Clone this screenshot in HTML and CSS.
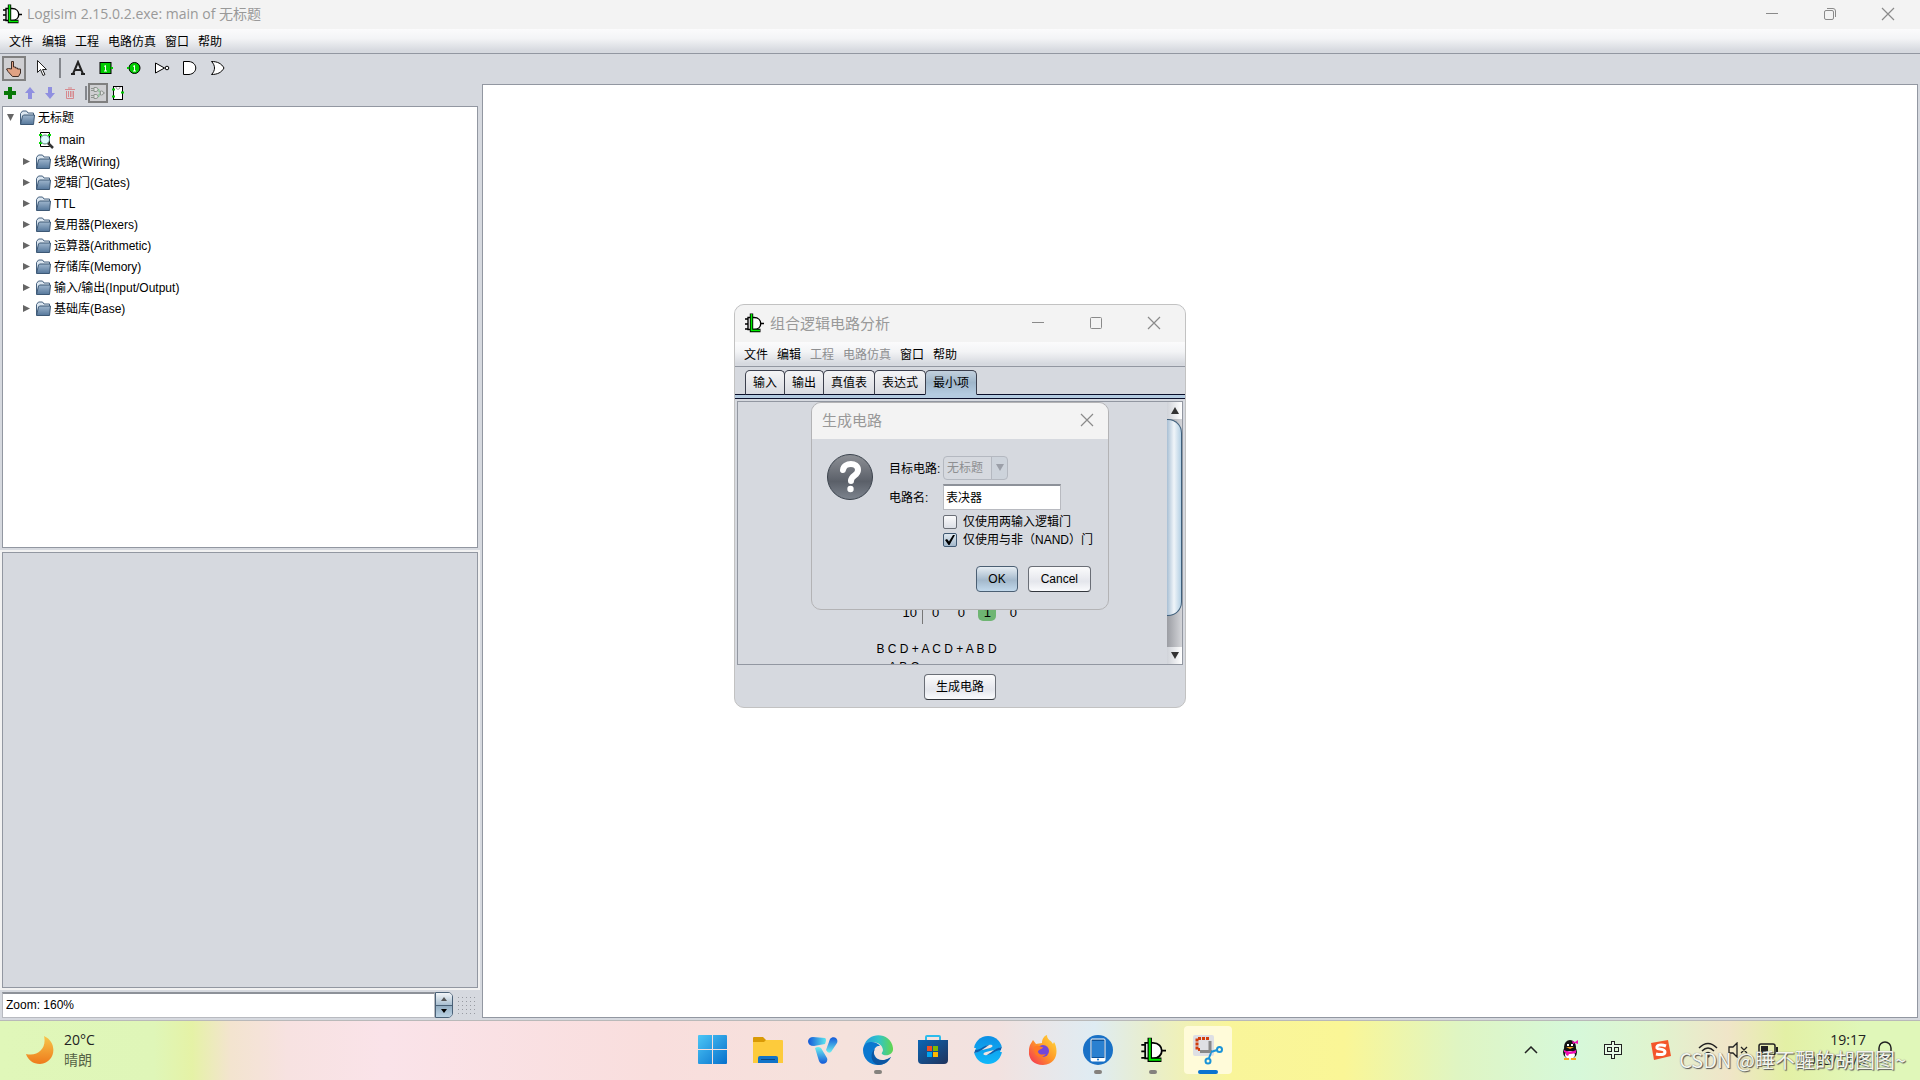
FILE: index.html
```
<!DOCTYPE html>
<html lang="zh-CN">
<head>
  <meta charset="UTF-8">
  <meta name="viewport" content="width=device-width, initial-scale=1.0">
  <title>Logisim 2.15.0.2.exe: main of 无标题</title>
  <link rel="stylesheet" href="styles.css">
</head>
<body>
  <!-- shared icons -->
  <svg class="defs" width="0" height="0" aria-hidden="true">
    <defs>
      <linearGradient id="folderFill" x1="0" y1="0" x2="0" y2="1">
        <stop offset="0" stop-color="#9fb6cd"/><stop offset="1" stop-color="#55779b"/>
      </linearGradient>
      <symbol id="logo" viewBox="0 0 20 20">
        <path d="M1 6h3M1 11h3M1 16h3M17 10.500h3" stroke="#000" stroke-width="1.300"/>
        <path d="M4 4.500h6c9 0 9 12 0 12H4z" fill="#fff" stroke="#000" stroke-width="1.400"/>
        <path d="M7.500 .5v17h9" fill="none" stroke="#000" stroke-width="3.400"/>
        <path d="M7.500 1v16.500h8.500" fill="none" stroke="#0e0" stroke-width="1.600"/>
      </symbol>
      <symbol id="folder" viewBox="0 0 16 16">
        <path d="M1.500 14V3.500L3.500 1h4l1.500 2h5.500v3" fill="#dbe6f0" stroke="#46617e"/>
        <path d="M1.500 14.500L3.500 6l1-1h11l-1 9.500z" fill="url(#folderFill)" stroke="#3d5875"/>
      </symbol>
      <symbol id="closeX" viewBox="0 0 14 14">
        <path d="M1 1l12 12M13 1L1 13" stroke="#8a8a8a" stroke-width="1.200"/>
      </symbol>
      <symbol id="minus" viewBox="0 0 14 14">
        <path d="M1 6.500h12" stroke="#8a8a8a"/>
      </symbol>
    </defs>
  </svg>

  <header class="titlebar">
    <svg class="logo" width="20" height="20"><use href="#logo"/></svg>
    <h1>Logisim 2.15.0.2.exe: main of 无标题</h1>
    <div class="win-buttons">
      <button aria-label="最小化"><svg width="14" height="14"><use href="#minus"/></svg></button>
      <button aria-label="还原"><svg width="14" height="14" viewBox="0 0 14 14" fill="none" stroke="#8a8a8a"><rect x="1.500" y="3.500" width="9" height="9" rx="1.500"/><path d="M4 1.500h6a2.500 2.500 0 0 1 2.500 2.500v6"/></svg></button>
      <button aria-label="关闭"><svg width="14" height="14"><use href="#closeX"/></svg></button>
    </div>
  </header>

  <nav class="menubar">
    <button>文件</button><button>编辑</button><button>工程</button><button>电路仿真</button><button>窗口</button><button>帮助</button>
  </nav>

  <div class="toolbar">
    <button class="selected" aria-label="戳工具">
      <svg width="18" height="18" viewBox="0 0 18 18"><path d="M6.500 10V2.500h2V8h2v1h2v1h3v4l-2 3.500h-6L3 12.500 1.500 10l2-.5z" fill="#e0a284" stroke="#402c24"/></svg>
    </button>
    <button aria-label="编辑工具">
      <svg width="18" height="18" viewBox="0 0 18 18"><path d="M4.500 1.500v12l3-3 2.500 6 2-1-2.500-5h4z" fill="#fff" stroke="#222"/></svg>
    </button>
    <span class="sep"></span>
    <button aria-label="文本">
      <svg width="16" height="16" viewBox="0 0 16 16" fill="none" stroke="#222" stroke-width="2"><path d="M3 14L8 2l5 12M5 10h6"/><path d="M1 14h4M11 14h4"/></svg>
    </button>
    <button aria-label="输入引脚">
      <svg width="14" height="14" viewBox="0 0 14 14"><rect x="1" y="1.500" width="11" height="11" fill="#0c0" stroke="#000"/><path d="M5 5.500l1.500-1V10M5 10h3" fill="none" stroke="#fff"/><path d="M13 6v2" stroke="#0c0" stroke-width="2"/></svg>
    </button>
    <button aria-label="输出引脚">
      <svg width="14" height="14" viewBox="0 0 14 14"><circle cx="7.500" cy="7" r="5.500" fill="#0c0" stroke="#000"/><path d="M6 5.500l1.500-1V10M6 10h3" fill="none" stroke="#fff"/><path d="M1 6v2" stroke="#0c0" stroke-width="2"/></svg>
    </button>
    <button aria-label="非门">
      <svg width="16" height="14" viewBox="0 0 16 14" fill="#fff" stroke="#000"><path d="M1.500 2v10l9-5z"/><circle cx="13" cy="7" r="1.800"/></svg>
    </button>
    <button aria-label="与门">
      <svg width="14" height="14" viewBox="0 0 14 14"><path d="M.5 .5v13H6c9-1 9-12 0-13z" fill="#fff" stroke="#000"/></svg>
    </button>
    <button aria-label="或门">
      <svg width="14" height="14" viewBox="0 0 14 14"><path d="M.5 .5c4 4 4 9 0 13 6 0 10-2 12.500-6.500C10.500 2.500 6.500 .5 .5 .5z" fill="#fff" stroke="#000"/></svg>
    </button>
  </div>

  <main class="workspace">
    <aside class="side">
      <div class="small-toolbar">
        <button aria-label="添加电路"><svg width="12" height="12" viewBox="0 0 12 12"><path d="M6 0v12M0 6h12" stroke="#087808" stroke-width="4"/></svg></button>
        <button aria-label="上移"><svg width="12" height="12" viewBox="0 0 12 12"><path d="M6 0l5 6H8v6H4V6H1z" fill="#8f8fe0"/></svg></button>
        <button aria-label="下移"><svg width="12" height="12" viewBox="0 0 12 12"><path d="M6 12l5-6H8V0H4v6H1z" fill="#8f8fe0"/></svg></button>
        <button aria-label="删除"><svg width="12" height="12" viewBox="0 0 12 12" fill="none" stroke="#d6898e"><path d="M1 2.500h10M4 1h4M2.500 4v7.500h7V4M4.500 4v6M6.500 4v6M8 4v6"/></svg></button>
        <span class="sep"></span>
        <button class="selected" aria-label="编辑电路布局"><svg width="14" height="14" viewBox="0 0 14 14" fill="#e2e2e2" stroke="#8f9590"><path d="M3 1.500h2a2 2 0 0 1 0 4H3zM3 8.500h2a2 2 0 0 1 0 4H3zM9.500 5h1a2 2 0 0 1 0 4h-1z"/><path d="M0 2.500h3M0 4.500h3M0 9.500h3M0 11.500h3M12 7h2"/><path d="M7 3.500h1V6h1M7 10.500h1V8h1" fill="none" stroke="#7cc08a"/></svg></button>
        <button aria-label="编辑电路外观"><svg width="14" height="14" viewBox="0 0 14 14"><rect x="2.500" y=".5" width="9" height="13" fill="#fff" stroke="#000"/><path d="M5 1c0 3 4 3 4 0" fill="none" stroke="#999"/><path d="M1 3.500h3M1 10.500h3M10 6.500h3" stroke="#0c0" stroke-width="2"/></svg></button>
      </div>

      <ul class="tree">
        <li class="root"><button class="toggle open" aria-label="折叠"></button><svg width="16" height="16"><use href="#folder"/></svg><span>无标题</span></li>
        <li class="circuit"><svg width="16" height="18" viewBox="0 0 16 18"><path d="M2.500 1.500h9v14h-9z" fill="#fff" stroke="#000"/><path d="M1 4h3M1 12h3M10 4h3" stroke="#0d0" stroke-width="2"/><circle cx="7" cy="8.500" r="4.500" fill="#dffcff" stroke="#587" /><path d="M10 12l5 5" stroke="#333" stroke-width="2.500"/></svg><span>main</span></li>
        <li><button class="toggle" aria-label="展开"></button><svg width="16" height="16"><use href="#folder"/></svg><span>线路(Wiring)</span></li>
        <li><button class="toggle" aria-label="展开"></button><svg width="16" height="16"><use href="#folder"/></svg><span>逻辑门(Gates)</span></li>
        <li><button class="toggle" aria-label="展开"></button><svg width="16" height="16"><use href="#folder"/></svg><span>TTL</span></li>
        <li><button class="toggle" aria-label="展开"></button><svg width="16" height="16"><use href="#folder"/></svg><span>复用器(Plexers)</span></li>
        <li><button class="toggle" aria-label="展开"></button><svg width="16" height="16"><use href="#folder"/></svg><span>运算器(Arithmetic)</span></li>
        <li><button class="toggle" aria-label="展开"></button><svg width="16" height="16"><use href="#folder"/></svg><span>存储库(Memory)</span></li>
        <li><button class="toggle" aria-label="展开"></button><svg width="16" height="16"><use href="#folder"/></svg><span>输入/输出(Input/Output)</span></li>
        <li><button class="toggle" aria-label="展开"></button><svg width="16" height="16"><use href="#folder"/></svg><span>基础库(Base)</span></li>
      </ul>

      <div class="attributes"><div class="attributes-inner"></div></div>

      <div class="zoom">
        <input type="text" value="Zoom: 160%" aria-label="Zoom">
        <div class="spinner">
          <button aria-label="放大"><svg width="6" height="4" viewBox="0 0 6 4"><path d="M0 4h6L3 0z" fill="#555"/></svg></button>
          <button class="down" aria-label="缩小"><svg width="6" height="4" viewBox="0 0 6 4"><path d="M0 0h6L3 4z" fill="#000"/></svg></button>
        </div>
        <div class="grip"></div>
      </div>
    </aside>
    <section class="canvas"></section>
  </main>

  <footer class="taskbar">
    <div class="weather">
      <svg width="28" height="28" viewBox="0 0 28 28"><defs><linearGradient id="moon" x1="0" y1="0" x2="0" y2="1"><stop offset="0" stop-color="#f7c64a"/><stop offset="1" stop-color="#ee7a1c"/></linearGradient></defs><path d="M18 0c14 6 12 27-4 28C7 28 2 24 0 18c12 3 21-6 18-18z" fill="url(#moon)"/></svg>
      <div><p>20°C</p><p class="muted">晴朗</p></div>
    </div>

    <div class="apps">
      <button aria-label="开始"><svg width="30" height="30" viewBox="0 0 30 30"><defs><linearGradient id="win" x1="0" y1="0" x2="1" y2="1"><stop offset="0" stop-color="#4cc6f6"/><stop offset="1" stop-color="#0670cc"/></linearGradient></defs><path d="M0 1a1 1 0 0 1 1-1h13v14H0zM15 0h13a1 1 0 0 1 1 1v13H15zM0 15h14v14H1a1 1 0 0 1-1-1zM15 15h14v13a1 1 0 0 1-1 1H15z" fill="url(#win)"/></svg></button>
      <button aria-label="文件资源管理器"><svg width="30" height="28" viewBox="0 0 30 28"><path d="M0 2q0-1 1-1h9l3 3v5H0z" fill="#d99a06"/><path d="M0 6h11l2-2h16q1 0 1 1v22H0z" fill="#fdcb3c"/><path d="M5 27v-5q0-2 2-2h16q2 0 2 2v5z" fill="#1173c8"/><path d="M8 23.500h14" stroke="#0b477f"/></svg></button>
      <button aria-label="应用"><svg width="30" height="28" viewBox="0 0 30 28"><defs><linearGradient id="v1"><stop offset="0" stop-color="#1257d8"/><stop offset="1" stop-color="#5ee6ee"/></linearGradient><linearGradient id="v2" x1="0" y1="0" x2="0" y2="1"><stop offset="0" stop-color="#1257d8"/><stop offset="1" stop-color="#6df0f0"/></linearGradient><linearGradient id="v3" x1="0" y1="0" x2="0" y2="1"><stop offset="0" stop-color="#6df0f0"/><stop offset="1" stop-color="#1257d8"/></linearGradient></defs><path d="M5 1l12 1q2 1 0 6L6 10Q0 10 0 5 1 1 5 1z" fill="url(#v1)"/><path d="M22 3c3-4 9-1 7 4l-6 9q-3 2-5-2z" fill="url(#v2)"/><path d="M7 12q3-2 6 0l6 10c2 6-6 8-8 3z" fill="url(#v3)"/></svg></button>
      <button class="running" aria-label="Edge"><svg width="30" height="30" viewBox="0 0 30 30"><defs><linearGradient id="edge"><stop offset="0" stop-color="#249be0"/><stop offset=".5" stop-color="#31c4c9"/><stop offset="1" stop-color="#62d64b"/></linearGradient></defs><path d="M1 11C5-4 28-3 30 13c1 7-8 9-11 6-1-1 1-2 1-4C19 6 6 5 1 11z" fill="url(#edge)"/><path d="M0 15C0 5 13 5 17 11c-6-1-9 8-2 13 4 3 9 1 13-2-3 6-8 8-13 8C7 30 0 24 0 15z" fill="#0b78cf"/><path d="M12 14c-5 9 6 15 16 8-3 5-7 8-13 8C7 28 7 17 12 14z" fill="#0c56a2"/></svg></button>
      <button aria-label="Microsoft Store"><svg width="30" height="30" viewBox="0 0 30 30"><defs><linearGradient id="store" x1="0" y1="0" x2="1" y2="1"><stop offset="0" stop-color="#0b66b5"/><stop offset="1" stop-color="#20335c"/></linearGradient></defs><path d="M8 6V2q0-1 1-1h12q1 0 1 1v4" fill="none" stroke="#2cbcec" stroke-width="2"/><path d="M0 5h30v20q0 4-4 4H4q-4 0-4-4z" fill="url(#store)"/><path d="M9 11h5v5H9z" fill="#f25022"/><path d="M15 11h5v5h-5z" fill="#7fba00"/><path d="M9 17h5v5H9z" fill="#00a4ef"/><path d="M15 17h5v5h-5z" fill="#ffb900"/></svg></button>
      <button aria-label="浏览器"><svg width="28" height="28" viewBox="0 0 28 28"><defs><linearGradient id="swirl" x1="0" y1="0" x2="0" y2="1"><stop offset="0" stop-color="#0d8fe4"/><stop offset="1" stop-color="#10b8fa"/></linearGradient></defs><circle cx="14" cy="14" r="14" fill="url(#swirl)"/><path d="M0 17c6-1 9-7 15-8 4-1 5 2 1 3L4 15c-3 1-4 2-4 2zM28 11c-6 1-9 7-15 8-4 1-5-2-1-3l12-3c3-1 4-2 4-2z" fill="#f2e4e1"/><path d="M1 14c6 0 9-5 14-5-5 3-8 7-15 8zM27 14c-6 0-9 5-14 5 5-3 8-7 15-8z" fill="#0b5fae"/><path d="M0 12l2 0-2 5zM28 16h-2l2-5z" fill="#f2e4e1"/></svg></button>
      <button aria-label="Firefox"><svg width="28" height="30" viewBox="0 0 28 30"><defs><linearGradient id="fox" x1="1" y1="0" x2="0" y2="1"><stop offset="0" stop-color="#ffe03d"/><stop offset=".5" stop-color="#ff9528"/><stop offset="1" stop-color="#f3295a"/></linearGradient></defs><path d="M1 10l3-5 3 4 6-1c0-4 2-7 5-8 0 5 4 5 6 9l1-2c4 6 5 22-11 23C0 30-2 18 1 10z" fill="url(#fox)"/><circle cx="14" cy="16" r="6" fill="#7447d8"/><path d="M5 12c4-3 6 0 9 0-1 3-5 2-5 5 1 3 5 3 8 2-4 6-13 3-12-7z" fill="#ff7a24"/></svg></button>
      <button class="running" aria-label="手机助手"><svg width="30" height="30" viewBox="0 0 30 30"><circle cx="15" cy="15" r="15" fill="#1971c6"/><rect x="8" y="4" width="14" height="22" rx="1" fill="#0d5197" stroke="#fff"/><path d="M9 6h12v16H9z" fill="#2a80d0"/><path d="M8 23h14v3H8z" fill="#fff"/><circle cx="15" cy="24.500" r="1" fill="#1971c6"/></svg></button>
      <button class="running" aria-label="Logisim"><svg width="26" height="26"><use href="#logo"/></svg></button>
      <button class="running active" aria-label="截图工具"><svg width="30" height="30" viewBox="0 0 30 30"><rect width="21" height="21" rx="2" fill="#dedfe4"/><path d="M16 3.500H4v11h3" fill="none" stroke="#d23c0c" stroke-width="3" stroke-dasharray="3 1"/><path d="M17 6v11M7 16.500h12" fill="none" stroke="#888" stroke-width="3"/><circle cx="26.500" cy="14.500" r="2.500" fill="none" stroke="#1a93d8" stroke-width="2"/><circle cx="15" cy="26" r="2.500" fill="none" stroke="#1a93d8" stroke-width="2"/><path d="M18 17l6-2M18 18l-2 5" stroke="#1a93d8" stroke-width="2"/></svg></button>
    </div>

    <div class="tray">
      <button class="chevron" aria-label="显示隐藏的图标"><svg width="14" height="8" viewBox="0 0 14 8"><path d="M1 7l6-6 6 6" fill="none" stroke="#222" stroke-width="1.500"/></svg></button>
      <button class="qq" aria-label="QQ"><svg width="18" height="20" viewBox="0 0 18 20"><ellipse cx="8" cy="12" rx="7" ry="7" fill="#111"/><ellipse cx="8" cy="7" rx="6" ry="7" fill="#111"/><ellipse cx="8" cy="15" rx="5" ry="4" fill="#fff"/><path d="M5 4h2v2H5zM9 4h2v2H9z" fill="#fff"/><path d="M4 7h8l-4 2z" fill="#f9a51a"/><path d="M2 10q6 3 12 0v3q-4 1-7 1l-1 2-2-1v-2l-2-1zM10 1l3 1 3-2v4l-3-1-2 1z" fill="#f10bb4"/><path d="M2 18h5v2H2zM9 18h5v2H9z" fill="#f9a51a"/></svg></button>
      <button class="ime" aria-label="中文输入"><svg width="18" height="18" viewBox="0 0 18 18" fill="none"><path d="M2 5h14v7H2zM9 0v18" stroke="#222" stroke-width="4"/><path d="M2 5h14v7H2zM9 1v16" stroke="#e7fbe7" stroke-width="2"/></svg></button>
      <button class="sogou" aria-label="搜狗输入法"><svg width="20" height="20" viewBox="0 0 20 20"><path d="M0 3L17 0l3 16-17 4z" fill="#f4562a"/><path d="M15 6C10 4 5 5 6 8c1 2 8 0 8 4 0 3-5 3-9 2" fill="none" stroke="#fff" stroke-width="3"/></svg></button>
      <button class="status" aria-label="网络、音量、电池">
        <svg width="20" height="16" viewBox="0 0 20 16" fill="none" stroke="#222" stroke-width="1.500"><path d="M1 6q9-9 18 0M4 9q6-6 12 0M7 12q3-3 6 0"/><circle cx="10" cy="14" r="1" fill="#222"/></svg>
        <svg width="20" height="16" viewBox="0 0 20 16" fill="none" stroke="#222" stroke-width="1.300"><path d="M1 5h4l4-4v14l-4-4H1zM13 5l6 6M19 5l-6 6"/></svg>
        <svg width="20" height="16" viewBox="0 0 20 16"><rect x="1" y="2" width="16" height="11" rx="2" fill="none" stroke="#222" stroke-width="1.500"/><path d="M3 4h7v7H3zM18 5h2v5h-2z" fill="#222"/></svg>
      </button>
      <button class="clock"><span>19:17</span><span>2023/11/3</span></button>
      <button class="bell" aria-label="通知"><svg width="18" height="20" viewBox="0 0 18 20" fill="none" stroke="#222" stroke-width="1.500"><path d="M3 13V8a6 6 0 0 1 12 0v5l2 3H1zM7 17q2 2 4 0"/></svg></button>
    </div>
    <span class="watermark">CSDN @睡不醒的胡图图~</span>
  </footer>

  <!-- 组合逻辑电路分析 -->
  <section class="window">
    <header class="window-title">
      <svg width="20" height="20"><use href="#logo"/></svg>
      <h2>组合逻辑电路分析</h2>
      <div class="win-buttons">
        <button aria-label="最小化"><svg width="14" height="14"><use href="#minus"/></svg></button>
        <button aria-label="最大化"><svg width="14" height="14" viewBox="0 0 14 14"><rect x="1.500" y="1.500" width="11" height="11" rx="1" fill="none" stroke="#8a8a8a"/></svg></button>
        <button aria-label="关闭"><svg width="14" height="14"><use href="#closeX"/></svg></button>
      </div>
    </header>
    <nav class="menubar">
      <button>文件</button><button>编辑</button><button disabled>工程</button><button disabled>电路仿真</button><button>窗口</button><button>帮助</button>
    </nav>
    <div class="tabs">
      <button>输入</button><button>输出</button><button>真值表</button><button>表达式</button><button class="current">最小项</button>
    </div>
    <div class="pane">
      <div class="kmap">
        <table>
          <tr><th>10</th><td>0</td><td>0</td><td><span class="group">1</span></td><td>0</td></tr>
        </table>
        <p class="expr">B C D + A C D + A B D</p>
        <p class="expr next">A B C</p>
      </div>
      <div class="scrollbar">
        <button aria-label="向上"><svg width="8" height="7" viewBox="0 0 8 7"><path d="M0 7h8L4 0z" fill="#333"/></svg></button>
        <div class="track"><div class="thumb"></div></div>
        <button aria-label="向下"><svg width="8" height="7" viewBox="0 0 8 7"><path d="M0 0h8L4 7z" fill="#333"/></svg></button>
      </div>
    </div>
    <div class="window-footer"><button class="btn">生成电路</button></div>
  </section>

  <!-- 生成电路 -->
  <form class="dialog">
    <header class="dialog-title">
      <h2>生成电路</h2>
      <button type="button" aria-label="关闭"><svg width="14" height="14"><use href="#closeX"/></svg></button>
    </header>
    <div class="dialog-body">
      <svg class="question" width="48" height="48" viewBox="0 0 48 48"><defs><linearGradient id="q" x1="0" y1="0" x2="0" y2="1"><stop offset="0" stop-color="#8d9096"/><stop offset=".6" stop-color="#5b6069"/><stop offset="1" stop-color="#7d848e"/></linearGradient></defs><circle cx="24" cy="24" r="22.500" fill="url(#q)" stroke="#3c444e"/><path d="M17 17c1-8 15-8 15 0 0 6-7 5-7 11" fill="none" stroke="#fff" stroke-width="6" stroke-linecap="round"/><circle cx="24.500" cy="36" r="3.200" fill="#fff"/></svg>
      <div class="fields">
        <label for="target">目标电路:</label>
        <span class="combo">
          <select id="target" disabled><option>无标题</option></select>
          <svg width="8" height="7" viewBox="0 0 8 7"><path d="M0 0h8L4 7z" fill="#9b9fa8"/></svg>
        </span>
        <label for="circuit">电路名:</label>
        <input id="circuit" type="text" value="表决器">
        <div class="checks">
          <label><input type="checkbox">仅使用两输入逻辑门</label>
          <label><input type="checkbox" checked>仅使用与非（NAND）门</label>
        </div>
      </div>
    </div>
    <div class="dialog-buttons">
      <button type="button" class="btn primary">OK</button>
      <button type="button" class="btn">Cancel</button>
    </div>
  </form>
</body>
</html>
```
FILE: styles.css
```
* {
  box-sizing: border-box;
}
body {
  margin: 0;
  height: 100vh;
  display: flex;
  flex-direction: column;
  overflow: hidden;
  background: #d6d9df;
  color: #000;
  font: 12px/16px "Liberation Sans", "Noto Sans CJK SC", sans-serif;
}
h1, h2, p, ul {
  margin: 0;
  padding: 0;
}
button {
  margin: 0;
  padding: 0;
  border: 0;
  background: none;
  color: inherit;
  font: inherit;
}
input, select {
  margin: 0;
  color: #000;
  font: inherit;
}
svg {
  display: block;
  flex: none;
}
.defs {
  position: absolute;
}

/* title bar and menus */
.titlebar {
  display: flex;
  align-items: center;
  height: 29px;
  padding: 0 3px 1px 2px;
  background: #f3f3f3;
}
h1, h2 {
  color: #999;
  font: 15px/20px "Noto Sans CJK SC", sans-serif;
}
h1 {
  margin-left: 5px;
  font: 14px/20px "Open Sans", "Noto Sans CJK SC", sans-serif;
}
.win-buttons {
  display: flex;
  margin-left: auto;
}
.win-buttons button {
  display: flex;
  justify-content: center;
  width: 58px;
}
.menubar {
  display: flex;
  gap: 9px;
  align-items: center;
  height: 25px;
  padding: 2px 9px 0;
  border-bottom: 1px solid #9297a1;
  background: linear-gradient(#fbfbfc, #f3f4f6 40%, #d6d9df 90%);
}
.menubar button:disabled {
  color: #8e8f91;
}

/* toolbars */
.toolbar {
  display: flex;
  gap: 4px;
  align-items: center;
  height: 28px;
  padding: 0 2px;
}
.toolbar button, .small-toolbar button {
  display: flex;
  align-items: center;
  justify-content: center;
  width: 24px;
  height: 25px;
}
.toolbar .selected, .small-toolbar .selected {
  border: 2px solid #808080;
  background: #cfcfd2;
}
.sep {
  width: 2px;
  height: 20px;
  margin: 0 1px;
  background: #84878d;
}
.small-toolbar {
  display: flex;
  align-items: center;
  height: 24px;
  padding-bottom: 2px;
}
.small-toolbar button {
  width: 20px;
  height: 20px;
}
.small-toolbar .sep {
  height: 14px;
  margin: 0 1px 0 5px;
}

/* workspace */
.workspace {
  flex: 1;
  display: flex;
  min-height: 0;
}
.side {
  flex: 0 0 482px;
  display: flex;
  flex-direction: column;
}
.canvas {
  flex: 1;
  margin: 2px 2px 2px 0;
  border: 1px solid #9297a1;
  background: #fff;
}
.tree {
  flex: 444 0 0;
  margin: 0 4px 0 2px;
  overflow: hidden;
  border: 1px solid #9297a1;
  background: #fff;
  list-style: none;
}
.tree li {
  display: flex;
  gap: 3px;
  align-items: center;
  height: 21px;
  padding-left: 18px;
}
.tree .root {
  padding-left: 2px;
}
.tree .circuit {
  gap: 5px;
  height: 23px;
  padding-left: 35px;
}
.toggle {
  width: 11px;
  height: 11px;
}
.toggle::before {
  content: "";
  display: block;
  width: 7px;
  height: 7px;
  margin: 2px;
  background: #666;
  clip-path: polygon(0 0, 100% 50%, 0 100%);
}
.toggle.open::before {
  clip-path: polygon(0 0, 100% 0, 50% 100%);
}
.attributes {
  flex: 439 0 0;
  margin: 2px 2px 2px 0;
  border: 2px solid #f2f2f2;
}
.attributes-inner {
  height: 100%;
  border: 1px solid #9297a1;
}
.zoom {
  display: flex;
  height: 26px;
  margin: 0 4px 2px 2px;
}
.zoom input {
  flex: 1;
  min-width: 0;
  padding: 0 3px 2px;
  border: 1px solid #b8bac0;
  border-top: 2px solid #8d9199;
  background: #fff;
}
.spinner {
  display: flex;
  flex-direction: column;
  width: 18px;
  overflow: hidden;
  border: 1px solid #4a6177;
  border-radius: 0 5px 5px 0;
}
.spinner button {
  flex: 1;
  display: flex;
  align-items: center;
  justify-content: center;
  background: linear-gradient(#f2f5f8, #a9bfd1);
}
.spinner .down {
  border-top: 1px solid #4a6177;
  background: linear-gradient(#93aec3, #bcd3e4);
}
.grip {
  width: 23px;
  margin: 2px 0 2px 2px;
  background: linear-gradient(90deg, #d6d9df 3px, transparent 3px) 0 0 / 4px 4px, linear-gradient(#d6d9df 3px, #989ba2 3px) 0 0 / 4px 4px;
}

/* taskbar */
.taskbar {
  position: relative;
  display: grid;
  grid-template-columns: 1fr auto 1fr;
  align-items: center;
  height: 60px;
  padding-bottom: 2px;
  border-top: 1px solid #b9b9b9;
  background: linear-gradient(90deg, #e0f7b9 0%, #dff6b8 8%, #e5f2a6 10%, #f3e4cf 12%, #f7e2e1 15%, #fae3e9 20%, #f9dedd 34%, #f5e2dc 44%, #f2e2e0 52%, #dfecf3 57%, #e9eecb 60%, #f9f59a 64%, #faf696 70%, #dff5c3 76%, #d6f8da 82%, #dff4cf 86%, #f0e5c8 90%, #e3f0a5 93%, #e0f7b9 97%);
}
.weather {
  display: flex;
  gap: 10px;
  align-items: center;
  padding-left: 26px;
  font: 15px/20px "Open Sans", "Noto Sans CJK SC", sans-serif;
}
.weather p {
  color: #222;
  font-size: 14px;
}
.weather .muted {
  color: #566346;
}
.apps {
  display: flex;
  gap: 7px;
}
.apps button {
  position: relative;
  display: flex;
  align-items: center;
  justify-content: center;
  width: 48px;
  height: 48px;
  border-radius: 4px;
}
.apps .active {
  background: #fffbd9;
}
.apps .running::after {
  content: "";
  position: absolute;
  bottom: 0;
  left: 20px;
  width: 8px;
  height: 4px;
  border-radius: 2px;
  background: #85827e;
}
.apps .active::after {
  left: 14px;
  width: 20px;
  background: #0a74d0;
}
.tray {
  display: flex;
  align-items: center;
  justify-content: flex-end;
  padding-right: 26px;
}
.chevron, .qq {
  margin-right: 24px;
}
.ime {
  margin-right: 29px;
}
.sogou {
  margin-right: 27px;
}
.status {
  display: flex;
  gap: 10px;
  margin-right: 22px;
}
.clock {
  display: flex;
  flex-direction: column;
  align-items: flex-end;
  margin-right: 10px;
  color: #222;
  font: 14px/20px "Open Sans", sans-serif;
}
.watermark {
  position: absolute;
  right: 14px;
  bottom: 6px;
  color: #f4f6ee;
  font: 20px/28px "Noto Sans CJK SC", sans-serif;
  text-shadow: 1px 1px 1px #555, 0 0 1px #777;
}

/* buttons */
.btn {
  height: 26px;
  padding: 0 11px;
  border: 1px solid #6a6e76;
  border-bottom-color: #33373d;
  border-radius: 4px;
  background: linear-gradient(#fbfbfc, #e4e6ec 60%, #fafbfd);
}
.btn.primary {
  border-color: #4b5f73;
  background: linear-gradient(#e6edf3, #a3b8cb 55%, #c2d9ec);
}

/* analysis window */
.window {
  position: absolute;
  left: 734px;
  top: 304px;
  display: flex;
  flex-direction: column;
  width: 452px;
  height: 404px;
  overflow: hidden;
  border: 1px solid #c2c2c2;
  border-radius: 10px;
  background: #d6d9df;
}
.window-title {
  display: flex;
  flex: none;
  gap: 6px;
  align-items: center;
  height: 37px;
  padding: 0 2px 2px 9px;
  background: #f3f3f3;
}
.window .menubar {
  flex: none;
}
.tabs {
  display: flex;
  flex: none;
  height: 32px;
  padding: 3px 10px 0;
  border-bottom: 1px solid #0a0f2a;
  background: linear-gradient(#0a0f2a, #0a0f2a) 0 27px / 100% 1px no-repeat, linear-gradient(#b4cbe0, #b4cbe0) 0 28px / 100% 3px no-repeat;
}
.tabs button {
  height: 25px;
  margin-right: -1px;
  padding: 0 7px;
  border: 1px solid #3b3f4d;
  border-bottom-color: #0a0f2a;
  border-radius: 5px 5px 0 0;
  background: linear-gradient(#f4f4f6, #d9dbe1);
}
.tabs .current {
  border-bottom-color: #b4cbe0;
  background: linear-gradient(#c3d0dd, #9fb6ca 50%, #b4cbe0);
}
.pane {
  flex: 1;
  display: flex;
  min-height: 0;
  margin: 2px;
  overflow: hidden;
  border: 1px solid #9297a1;
}
.kmap {
  flex: 1;
  display: flex;
  flex-direction: column;
  justify-content: flex-end;
  align-items: center;
  height: 274px;
}
.kmap table {
  margin: 0 0 16px 24px;
  border-collapse: collapse;
  font-size: 13px;
}
.kmap th {
  padding: 0 5px 0 0;
  border-right: 1px solid #777;
  font-weight: normal;
}
.kmap td {
  width: 26px;
  height: 22px;
  padding: 0;
  text-align: center;
}
.group {
  display: block;
  width: 18px;
  margin: 0 auto;
  border-radius: 5px;
  background: #6fb573;
}
.expr {
  width: 120px;
  margin-right: 32px;
  line-height: 18px;
  white-space: nowrap;
}
.expr.next {
  padding-left: 12px;
}
.scrollbar {
  display: flex;
  flex-direction: column;
  width: 15px;
}
.scrollbar button {
  display: flex;
  align-items: center;
  justify-content: center;
  height: 17px;
  background: linear-gradient(90deg, #d0d3d9, #fff);
}
.track {
  flex: 1;
  padding-bottom: 31px;
  background: linear-gradient(90deg, #9b9da3, #d4d5d9);
}
.thumb {
  height: 100%;
  border: 1px solid #40607c;
  border-left: 0;
  border-radius: 0 14px 14px 0;
  background: linear-gradient(90deg, #a8bfd4, #f0f5f9 50%, #b4d0e4);
}
.window-footer {
  display: flex;
  flex: none;
  justify-content: center;
  padding: 7px 0;
}

/* dialog */
.dialog {
  position: absolute;
  left: 811px;
  top: 402px;
  display: flex;
  flex-direction: column;
  width: 298px;
  height: 208px;
  overflow: hidden;
  border: 1px solid #b3b3b5;
  border-radius: 10px;
  background: #d6d9df;
}
.dialog-title {
  display: flex;
  align-items: center;
  justify-content: space-between;
  height: 36px;
  padding: 0 14px 2px 10px;
  background: #f3f3f3;
}
.dialog-body {
  display: flex;
  gap: 15px;
  padding: 14px 14px 0;
}
.fields {
  display: grid;
  grid-template-columns: 50px auto;
  gap: 4px;
  align-items: center;
  justify-items: start;
  padding-top: 3px;
  white-space: nowrap;
}
.fields > label {
  padding-top: 2px;
}
.combo {
  position: relative;
  display: block;
}
.combo select {
  appearance: none;
  width: 65px;
  height: 24px;
  padding: 0 3px;
  border: 1px solid #b4b8c0;
  border-radius: 4px;
  background: linear-gradient(90deg, transparent 47px, #b4b8c0 47px, #b4b8c0 48px, #cdd3db 48px);
  color: #8e8f91;
  opacity: 1;
}
.combo svg {
  position: absolute;
  top: 8px;
  right: 4px;
}
.fields input[type="text"] {
  width: 118px;
  height: 26px;
  padding: 0 2px 2px;
  border: 1px solid #b8bac0;
  border-top: 2px solid #8d9199;
  background: #fff;
}
.checks {
  grid-column: 2;
  margin-top: -1px;
}
.checks label {
  display: flex;
  gap: 6px;
  align-items: center;
  height: 18px;
}
.checks input {
  appearance: none;
  flex: none;
  width: 14px;
  height: 14px;
  border: 1px solid #6a6e76;
  border-radius: 2px;
  background: linear-gradient(#fbfbfc, #dcdfe6);
}
.checks input:checked {
  border-color: #3f5872;
  background: linear-gradient(#dfe8f0, #a3b8cb);
}
.checks input:checked::after {
  content: "";
  display: block;
  width: 10px;
  height: 10px;
  margin: 1px;
  background: #000;
  clip-path: polygon(0 50%, 20% 40%, 40% 65%, 80% 0, 100% 0, 45% 100%, 35% 100%);
}
.dialog-buttons {
  display: flex;
  gap: 10px;
  justify-content: flex-end;
  margin-top: auto;
  padding: 0 17px 17px;
}
.dialog-buttons .btn:last-child {
  padding: 0 12px;
}
```
